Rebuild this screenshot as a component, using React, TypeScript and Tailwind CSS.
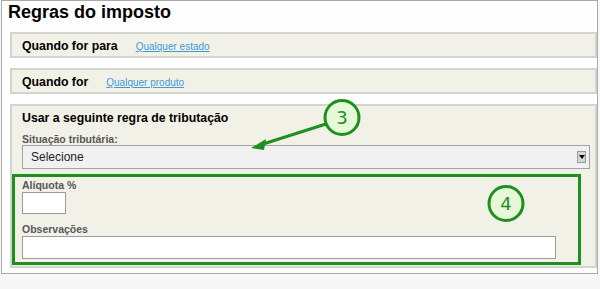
import React from 'react';

const font = { fontFamily: '"Liberation Sans", Arial, sans-serif' };

const Panel: React.FC<{ label: string; link: string }> = ({ label, link }) => (
  <div className="flex h-[26px] items-baseline gap-[18px] border-2 border-[#d3d3cf] bg-[#f2f1e7] pl-[10px] pt-[5px]">
    <span className="text-[12.3px] font-bold leading-[14px] text-black">{label}</span>
    <a href="#" className="text-[10px] leading-[12px] text-[#3d9bd6] underline">
      {link}
    </a>
  </div>
);

const Annotations: React.FC = () => (
  <svg className="pointer-events-none absolute left-0 top-0" width="600" height="289">
    <line x1="326" y1="124" x2="260" y2="145" stroke="#1f8f1f" strokeWidth="3" />
    <polygon points="251,148 266,139 264,150" fill="#1f8f1f" />
    <circle cx="342" cy="117.5" r="17" fill="#e6f8d8" stroke="#1f8f1f" strokeWidth="3" />
    <text x="342" y="124" textAnchor="middle" fontSize="18" fill="#1f8f1f" fontFamily="DejaVu Sans, sans-serif">
      3
    </text>
    <circle cx="506" cy="203.5" r="17" fill="#e6f8d8" stroke="#1f8f1f" strokeWidth="3" />
    <text x="506" y="210" textAnchor="middle" fontSize="18" fill="#1f8f1f" fontFamily="DejaVu Sans, sans-serif">
      4
    </text>
  </svg>
);

export default function App() {
  return (
    <div className="relative h-[289px] w-[600px] overflow-hidden bg-[#f7f7f7]" style={font}>
      <div className="ml-[1px] w-[597px] border border-[#a9a9a9] bg-[#fefefe] pb-[5px] pl-[8px]">
        <h1 className="-ml-[2px] text-[18px] font-bold leading-[22px] text-black">Regras do imposto</h1>

        <div className="mt-[9px] flex flex-col gap-[10px]">
          <Panel label="Quando for para" link="Qualquer estado" />
          <Panel label="Quando for" link="Qualquer produto" />

          <div className="border-2 border-[#d3d3cf] bg-[#f2f1e7] pb-[1px] pl-[10px] pr-[5px] pt-[5px]">
            <h2 className="text-[12.3px] font-bold leading-[14px] text-black">
              Usar a seguinte regra de tributação
            </h2>
            <label className="mt-[8px] block text-[10.5px] font-bold leading-[12px] text-[#575757]">
              Situação tributária:
            </label>
            <div className="flex h-[24px] items-center justify-between border border-[#a3a3a3] bg-[#f1f1f1] pl-[8px] pr-[3px]">
              <span className="text-[12px] text-[#222]">Selecione</span>
              <span className="flex h-[12px] w-[9px] items-center justify-center border border-[#9a9a9a] bg-[#d6d6d6]">
                <span className="h-0 w-0 border-x-[3px] border-t-[4px] border-x-transparent border-t-black" />
              </span>
            </div>

            <div className="-ml-[10px] mt-[5px] w-[569px] border-[3px] border-[#1f8f1f] pb-[3px] pl-[7px] pt-[2px]">
              <label className="block text-[10.5px] font-bold leading-[12px] text-[#575757]">Alíquota %</label>
              <input className="mt-[1px] block h-[22px] w-[44px] border border-[#9c9c9c] bg-white" />
              <label className="mt-[9px] block text-[10.5px] font-bold leading-[12px] text-[#575757]">
                Observações
              </label>
              <input className="mt-[1px] block h-[23px] w-[534px] border border-[#9c9c9c] bg-white" />
            </div>
          </div>
        </div>
      </div>
      <Annotations />
    </div>
  );
}
